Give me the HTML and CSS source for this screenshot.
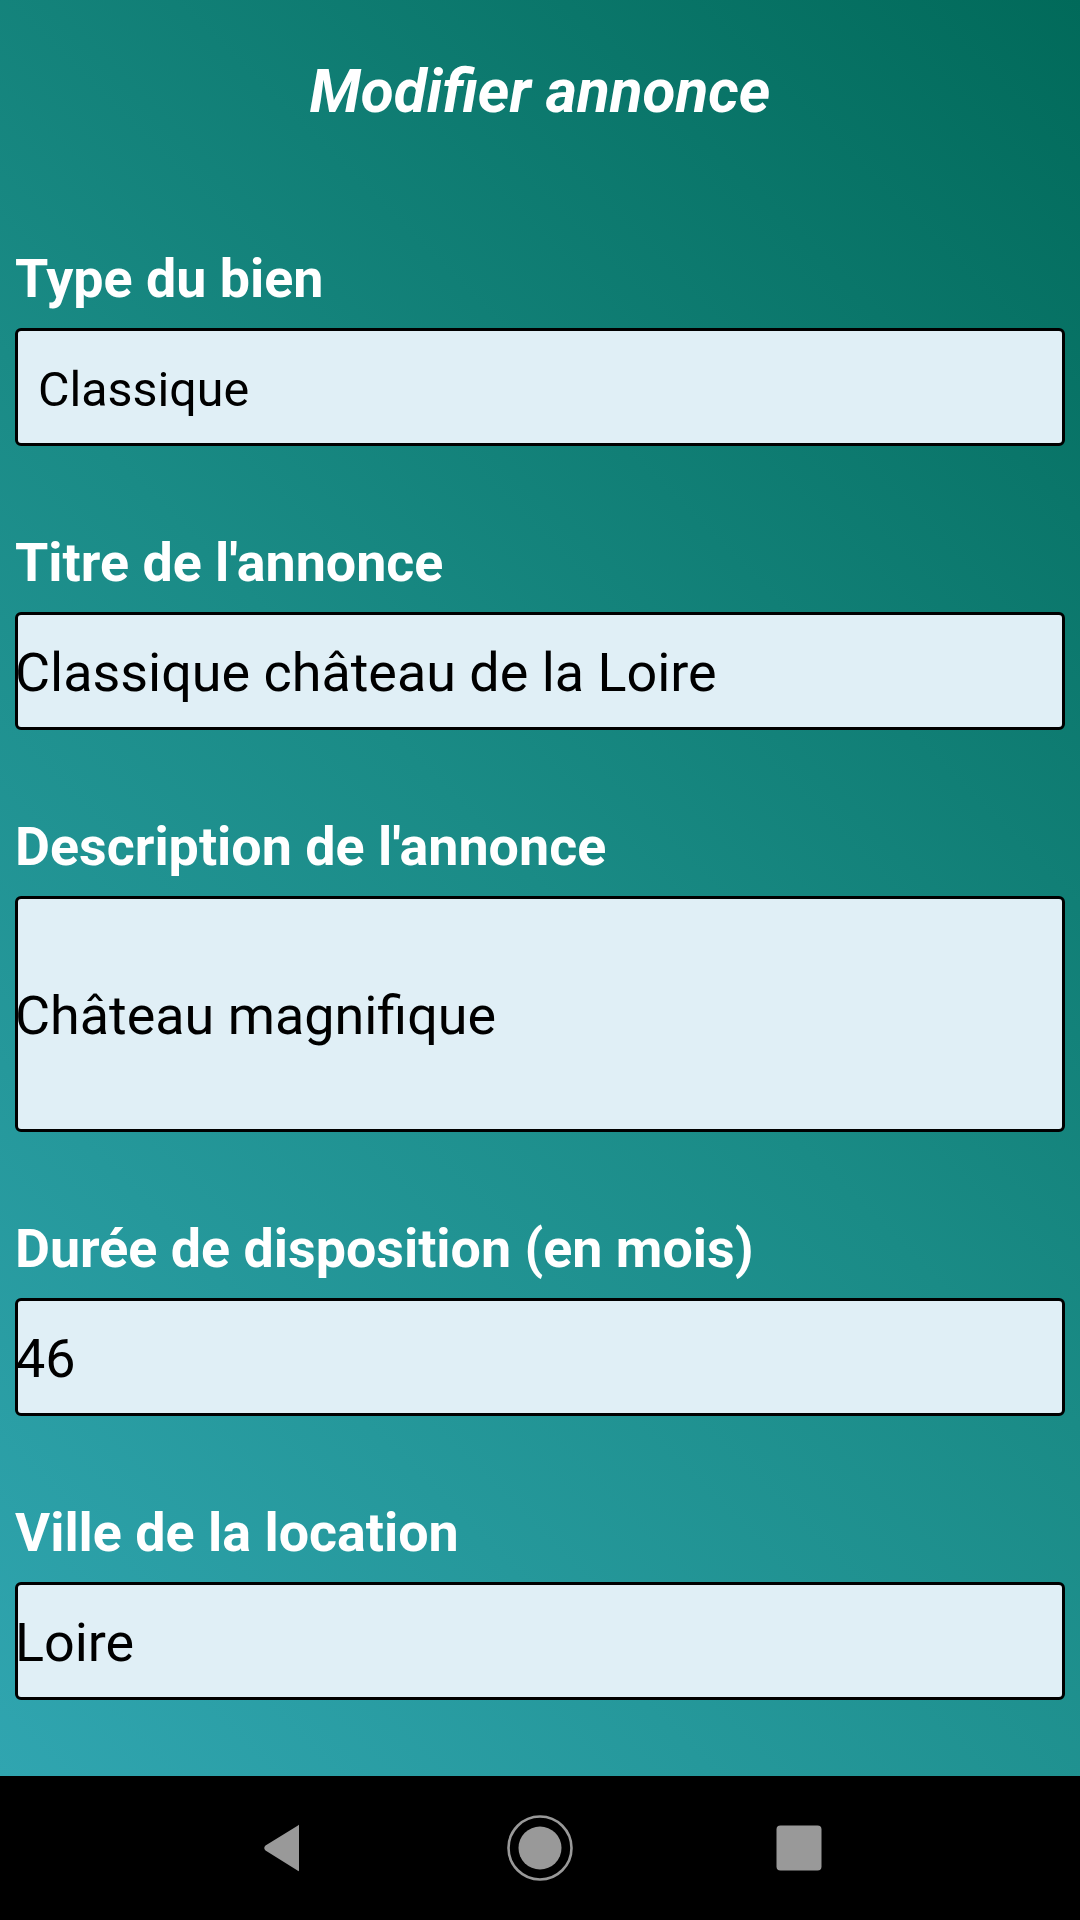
FILE: index.html
```html
<!DOCTYPE html>
<html lang="fr">
<head>
<meta charset="utf-8">
<title>Modifier annonce</title>
<link rel="stylesheet" href="styles.css">
</head>
<body>
<div class="phone">
  <main class="screen">
    <h1 class="title">Modifier annonce</h1>

    <div class="field">
      <div class="label">Type du bien</div>
      <div class="input input-padded">Classique</div>
    </div>

    <div class="field">
      <div class="label">Titre de l'annonce</div>
      <div class="input">Classique château de la Loire</div>
    </div>

    <div class="field">
      <div class="label">Description de l'annonce</div>
      <div class="input input-tall">Château magnifique</div>
    </div>

    <div class="field">
      <div class="label">Durée de disposition (en mois)</div>
      <div class="input">46</div>
    </div>

    <div class="field">
      <div class="label">Ville de la location</div>
      <div class="input">Loire</div>
    </div>
  </main>

  <nav class="navbar">
    <div class="nav-btn">
      <svg width="48" height="52" viewBox="0 0 48 52">
        <path d="M41 3.5 Q42 2 42 4 L42 48 Q42 50 40.5 48.5 L8.5 28.5 Q6 26 8.5 23.5 Z" fill="#999999"/>
      </svg>
    </div>
    <div class="nav-btn">
      <svg width="68" height="68" viewBox="0 0 68 68">
        <circle cx="34" cy="34" r="31.5" fill="none" stroke="#999999" stroke-width="2.6"/>
        <circle cx="34" cy="34" r="21.5" fill="#999999"/>
      </svg>
    </div>
    <div class="nav-btn">
      <svg width="48" height="48" viewBox="0 0 48 48">
        <rect x="1.5" y="1.5" width="45" height="45" rx="4" fill="#999999"/>
      </svg>
    </div>
  </nav>
</div>
</body>
</html>
```

FILE: styles.css
```css
html, body {
  margin: 0;
  padding: 0;
  background: #000;
}

.phone {
  width: 1080px;
  height: 1920px;
  display: flex;
  flex-direction: column;
  overflow: hidden;
  font-family: Roboto, "Liberation Sans", Arial, sans-serif;
}

.screen {
  height: 1776px;
  box-sizing: border-box;
  padding: 57px 15px 0;
  background: linear-gradient(45deg, #30a5b0 0%, #1a8b86 50%, #016a5a 100%);
  display: flex;
  flex-direction: column;
}

.title {
  margin: 0 0 121px;
  font-size: 60.3px;
  line-height: 70px;
  font-weight: 700;
  font-style: italic;
  color: #ffffff;
  text-align: center;
}

.field {
  display: flex;
  flex-direction: column;
}

.field + .field {
  margin-top: 86px;
}

.label {
  font-size: 53.8px;
  line-height: 62px;
  font-weight: 700;
  color: #ffffff;
  margin-bottom: 18px;
}

.input {
  box-sizing: border-box;
  height: 118px;
  border: 3px solid #000000;
  border-radius: 6px;
  background: #e0eff6;
  display: flex;
  align-items: center;
  font-size: 53.9px;
  line-height: 64px;
  color: #000000;
  padding: 3px 0 0;
  text-indent: -3px;
  white-space: nowrap;
}

.input-padded {
  font-size: 48.4px;
  line-height: 58px;
  padding-left: 20px;
  padding-top: 5px;
  text-indent: 0;
}

.input-tall {
  height: 236px;
}

.navbar {
  height: 144px;
  background: #000000;
  display: flex;
  align-items: center;
  justify-content: center;
}

.nav-btn {
  width: 259px;
  display: flex;
  justify-content: center;
  align-items: center;
}
```
